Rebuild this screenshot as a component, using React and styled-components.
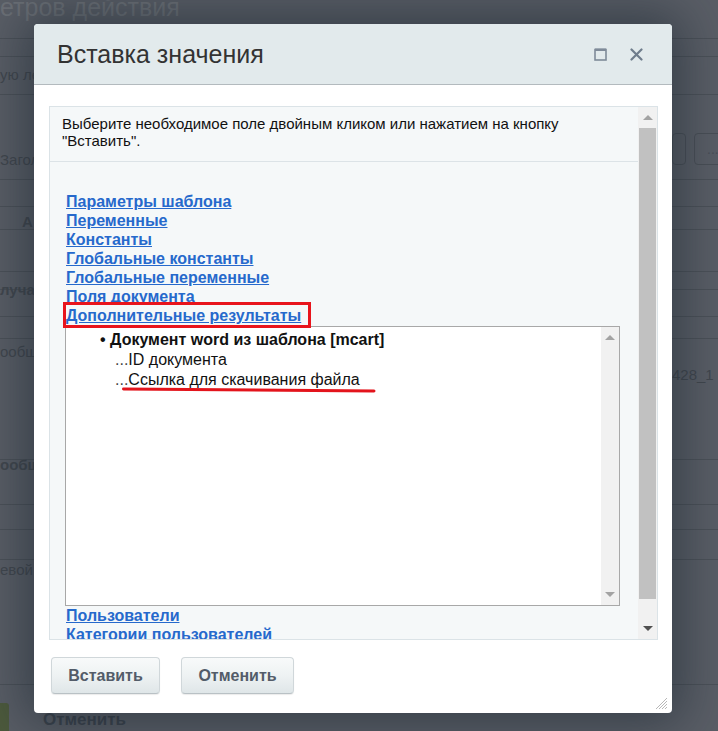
import React from "react";
import styled, { createGlobalStyle } from "styled-components";

const GlobalStyle = createGlobalStyle`
  html, body { margin: 0; padding: 0; width: 718px; height: 731px; overflow: hidden; }
  body { font-family: "Liberation Sans", Arial, sans-serif; background: #5a5e66; }
`;

const Screen = styled.div`
  position: relative;
  width: 718px;
  height: 731px;
  overflow: hidden;
  background: #5a5e66;
`;

/* ---------- dimmed page behind the dialog ---------- */
const BgPage = styled.div`
  height: 731px;
  display: flex;
  flex-direction: column;
  color: #42474e;
`;

const BgTitle = styled.div`
  flex-shrink: 0;
  box-sizing: border-box;
  border-bottom: 1px solid #4c5158;
  font-size: 25px;
  line-height: 20px;
  color: #6c7076;
  white-space: nowrap;
  overflow: hidden;
  margin-top: -3px;
  height: 42px;
`;

const BgRow = styled.div`
  height: ${(p) => p.h}px;
  flex-shrink: 0;
  box-sizing: border-box;
  border-bottom: 1px solid #4c5158;
  display: grid;
  grid-template-columns: 34px 638px 46px;
  font-size: 15px;
  line-height: 18px;
`;

const BgLabel = styled.span`
  display: block;
  white-space: nowrap;
  margin-top: ${(p) => p.top || 0}px;
  padding-left: ${(p) => p.indent || 0}px;
  font-weight: ${(p) => (p.bold ? 700 : 400)};
`;

const BgCell = styled.div`
  display: flex;
  align-items: flex-start;
  gap: 8px;
  margin-top: ${(p) => p.top || 0}px;
`;

const BgBox = styled.div`
  height: 32px;
  width: ${(p) => p.w}px;
  box-sizing: border-box;
  border: 1px solid #4a4f56;
  border-radius: 4px;
  color: #4a4f56;
  font-size: 14px;
  line-height: 30px;
  padding-left: 12px;
  flex-shrink: 0;
`;

const BgFooter = styled.div`
  flex: 1;
  display: flex;
  align-items: flex-end;
  gap: 34px;
`;

const BgGreen = styled.div`
  width: 9px;
  height: 28px;
  background: #4d5a3c;
  border-radius: 0 3px 0 0;
`;

const BgCancel = styled.span`
  font-weight: 700;
  font-size: 17px;
  color: #3b424b;
  line-height: 18px;
  margin-bottom: 2px;
`;

/* ---------- dialog ---------- */
const Dialog = styled.div`
  position: absolute;
  left: 34px;
  top: 24px;
  width: 638px;
  height: 689px;
  background: #fff;
  border-radius: 4px;
  box-shadow: 0 0 50px 10px rgba(24, 36, 48, 0.55);
  display: flex;
  flex-direction: column;
  overflow: hidden;
`;

const TitleBar = styled.div`
  height: 61px;
  flex-shrink: 0;
  box-sizing: border-box;
  background: #e2eaec;
  border-bottom: 1px solid #b3babe;
  display: flex;
  align-items: center;
  padding: 0 29px 0 23px;
`;

const Title = styled.h2`
  margin: 0;
  flex: 1;
  font-weight: 400;
  font-size: 25px;
  color: #333;
  font-family: "Liberation Sans", Arial, sans-serif;
`;

const TitleIcons = styled.div`
  display: flex;
  align-items: center;
  gap: 23px;
`;

const Body = styled.div`
  padding: 21px 14px 0 15px;
`;

const ContentBox = styled.div`
  height: 534px;
  box-sizing: border-box;
  border: 1px solid #dbe3e7;
  background: #f5f8f9;
  display: flex;
  overflow: hidden;
`;

const ContentMain = styled.div`
  flex: 1;
  overflow: hidden;
  display: flex;
  flex-direction: column;
`;

const Intro = styled.div`
  padding: 8px 12px 12px 12px;
  font-size: 15px;
  line-height: 17px;
  color: #111;
  border-bottom: 1px solid #dce3e7;
`;

const Links = styled.div`
  padding: 30px 0 0 16px;
  display: flex;
  flex-direction: column;
  align-items: flex-start;
`;

const FieldLink = styled.a`
  position: relative;
  display: inline-block;
  font-size: 16px;
  font-weight: 700;
  line-height: 19px;
  color: #2669cc;
  text-decoration: underline;
  white-space: nowrap;
  cursor: pointer;
  &::after {
    content: "";
    display: ${(p) => (p.marked ? "block" : "none")};
    position: absolute;
    left: -3px;
    right: -10px;
    top: -4px;
    bottom: -3px;
    border: 3px solid #e8141c;
  }
`;

const TreeBox = styled.div`
  align-self: stretch;
  margin: 1px 18px 0 -1px;
  height: 280px;
  box-sizing: border-box;
  border: 1px solid #a8a8a8;
  background: #fff;
  display: flex;
`;

const TreeList = styled.div`
  position: relative;
  flex: 1;
  padding: 3px 0 0 0;
  font-size: 16px;
  line-height: 20px;
  color: #111;
`;

const TreeGroup = styled.div`
  padding-left: 34px;
  font-weight: 700;
`;

const TreeItem = styled.div`
  padding-left: 49px;
`;

const Dots = styled.span`
  color: #444;
`;

const RedUnderline = styled.svg`
  position: absolute;
  left: 56px;
  top: 59px;
`;

const ScrollBar = styled.div`
  width: ${(p) => p.w}px;
  flex-shrink: 0;
  background: #f1f1f1;
  display: flex;
  flex-direction: column;
  align-items: center;
`;

const ScrollBtn = styled.div`
  height: ${(p) => p.h}px;
  width: 100%;
  display: flex;
  align-items: center;
  justify-content: center;
  flex-shrink: 0;
`;

const Arrow = styled.div`
  width: 0;
  height: 0;
  border-left: 5px solid transparent;
  border-right: 5px solid transparent;
  ${(p) =>
    p.up
      ? `border-bottom: 5px solid ${p.color};`
      : `border-top: 5px solid ${p.color};`}
`;

const Thumb = styled.div`
  width: 17px;
  height: ${(p) => p.h}px;
  background: #c1c1c1;
  flex-shrink: 0;
`;

const Spacer = styled.div`
  flex: 1;
`;

const Footer = styled.div`
  display: flex;
  gap: 21px;
  padding: 17px 0 0 2px;
`;

const Button = styled.button`
  height: 37px;
  width: ${(p) => p.w}px;
  box-sizing: border-box;
  border: 1px solid #d0d7da;
  border-bottom-color: #b9c1c5;
  border-radius: 4px;
  background: linear-gradient(to bottom, #f8fafa 0%, #eef2f3 50%, #dfe6e8 100%);
  box-shadow: 0 1px 1px rgba(0, 0, 0, 0.08);
  font-family: "Liberation Sans", Arial, sans-serif;
  font-weight: 700;
  font-size: 16px;
  color: #535c69;
  cursor: pointer;
  padding: 0;
`;

const Grip = styled.svg`
  position: absolute;
  right: 4px;
  bottom: 3px;
`;

const MaxIcon = () => (
  <svg width="13" height="13" viewBox="0 0 13 13">
    <rect x="1" y="1.5" width="11" height="10.5" fill="none" stroke="#7f8b99" strokeWidth="1.6" />
    <line x1="1" y1="1.8" x2="12" y2="1.8" stroke="#7f8b99" strokeWidth="2.4" />
  </svg>
);

const CloseIcon = () => (
  <svg width="13" height="13" viewBox="0 0 13 13">
    <path d="M1.5 1.5 L11.5 11.5 M11.5 1.5 L1.5 11.5" stroke="#6f7d8c" strokeWidth="2.2" strokeLinecap="round" />
  </svg>
);

const rows = [
  { h: 18 },
  { h: 38, left: { text: "ую ле", top: 9 } },
  { h: 85, left: { text: "Загол", top: 56 }, right: true },
  { h: 27 },
  { h: 23, left: { text: "А", top: 6, bold: true, indent: 22 } },
  { h: 42 },
  { h: 18, left: { text: "лучат", top: 9, bold: true } },
  { h: 27 },
  { h: 22 },
  { h: 121, left: { text: "ообщ", top: 4 }, rightText: "428_1" },
  { h: 45, left: { text: "ообщ", top: -4, bold: true } },
  { h: 25 },
  { h: 30 },
  { h: 125, left: { text: "евой", top: 1 } },
];

export default function App() {
  return (
    <Screen>
      <GlobalStyle />
      <BgPage>
        <BgTitle>етров действия</BgTitle>
        {rows.map((r, i) => (
          <BgRow key={i} h={r.h}>
            <div>
              {r.left && (
                <BgLabel top={r.left.top} bold={r.left.bold} indent={r.left.indent}>
                  {r.left.text}
                </BgLabel>
              )}
            </div>
            <div />
            {r.right ? (
              <BgCell top={38}>
                <BgBox w={10} />
                <BgBox w={40}>...</BgBox>
              </BgCell>
            ) : r.rightText ? (
              <BgCell top={27}>
                <BgLabel>{r.rightText}</BgLabel>
              </BgCell>
            ) : (
              <div />
            )}
          </BgRow>
        ))}
        <BgFooter>
          <BgGreen />
          <BgCancel>Отменить</BgCancel>
        </BgFooter>
      </BgPage>

      <Dialog>
        <TitleBar>
          <Title>Вставка значения</Title>
          <TitleIcons>
            <MaxIcon />
            <CloseIcon />
          </TitleIcons>
        </TitleBar>
        <Body>
          <ContentBox>
            <ContentMain>
              <Intro>
                Выберите необходимое поле двойным кликом или нажатием на кнопку
                <br />
                "Вставить".
              </Intro>
              <Links>
                <FieldLink>Параметры шаблона</FieldLink>
                <FieldLink>Переменные</FieldLink>
                <FieldLink>Константы</FieldLink>
                <FieldLink>Глобальные константы</FieldLink>
                <FieldLink>Глобальные переменные</FieldLink>
                <FieldLink>Поля документа</FieldLink>
                <FieldLink marked>Дополнительные результаты</FieldLink>
                <TreeBox>
                  <TreeList>
                    <TreeGroup>• Документ word из шаблона [mcart]</TreeGroup>
                    <TreeItem>
                      <Dots>...</Dots>ID документа
                    </TreeItem>
                    <TreeItem>
                      <Dots>...</Dots>Ссылка для скачивания файла
                    </TreeItem>
                    <RedUnderline width="256" height="8" viewBox="0 0 256 8">
                      <path d="M1.5 3 Q 110 3.5 252 5" fill="none" stroke="#e3141c" strokeWidth="3" strokeLinecap="round" />
                    </RedUnderline>
                  </TreeList>
                  <ScrollBar w={18}>
                    <ScrollBtn h={21}>
                      <Arrow up color="#a3a3a3" />
                    </ScrollBtn>
                    <Spacer />
                    <ScrollBtn h={21}>
                      <Arrow color="#a3a3a3" />
                    </ScrollBtn>
                  </ScrollBar>
                </TreeBox>
                <FieldLink>Пользователи</FieldLink>
                <FieldLink>Категории пользователей</FieldLink>
              </Links>
            </ContentMain>
            <ScrollBar w={19}>
              <ScrollBtn h={21}>
                <Arrow up color="#a3a3a3" />
              </ScrollBtn>
              <Thumb h={471} />
              <Spacer />
              <ScrollBtn h={21}>
                <Arrow color="#505050" />
              </ScrollBtn>
            </ScrollBar>
          </ContentBox>
          <Footer>
            <Button w={109}>Вставить</Button>
            <Button w={113}>Отменить</Button>
          </Footer>
        </Body>
        <Grip width="14" height="14" viewBox="0 0 14 14">
          <path d="M13 2 L2 13 M13 5 L5 13 M13 8 L8 13 M13 11 L11 13" stroke="#b8b8b8" strokeWidth="1" />
        </Grip>
      </Dialog>
    </Screen>
  );
}
